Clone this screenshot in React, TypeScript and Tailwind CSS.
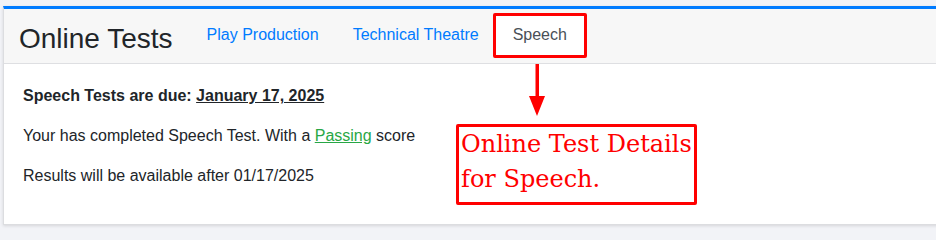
export default function App() {
  return (
    <div className="relative h-[240px] w-[936px] overflow-hidden bg-[#f2f3f7] pl-[3px] pt-[6px] font-['Liberation_Sans',Arial,sans-serif] text-[#212529]">
      <TestCard />

      {/* annotation: box around active tab */}
      <div className="absolute left-[493px] top-[13px] h-[45px] w-[94px] rounded-[2px] border-[3px] border-[#ff0000]" />

      {/* annotation: arrow */}
      <svg
        className="absolute left-[527px] top-[64px]"
        width="20"
        height="54"
        viewBox="0 0 20 54"
      >
        <rect x="8.5" y="0" width="3.5" height="34" fill="#ff0000" />
        <polygon points="2,32 18,32 10,52" fill="#ff0000" />
      </svg>

      {/* annotation: note */}
      <div className="absolute left-[456px] top-[124px] h-[81px] w-[241px] rounded-[2px] border-[3px] border-[#ff0000] pl-[2px] font-['DejaVu_Serif',serif] text-[24px] leading-[35px] text-[#ff0000]">
        Online Test Details
        <br />
        for Speech.
      </div>
    </div>
  );
}

const TestCard = () => {
  return (
    <div className="w-[960px] shrink-0 border border-t-[3px] border-[#dcdde0] border-t-[#007bff] bg-white shadow-[0_1px_3px_rgba(0,0,0,0.12)]">
      <div className="flex h-[55px] items-start border-b border-[#dedfe2] bg-[#f7f7f7] pl-[15px]">
        <h3 className="pt-[14px] text-[28px] leading-[32px] font-normal">
          Online Tests
        </h3>
        <nav className="ml-[17px] mt-[5px] flex text-[16px] leading-[24px]">
          <a className="border border-transparent px-4 py-2 text-[#007bff]">
            Play Production
          </a>
          <a className="border border-transparent px-4 py-2 text-[#007bff]">
            Technical Theatre
          </a>
          <a className="h-[44px] border border-transparent bg-white px-4 py-2 text-[#495057]">
            Speech
          </a>
        </nav>
      </div>

      <div className="px-[19px] pt-[20px] pb-[20px] text-[16px] leading-[24px]">
        <p className="mb-4 font-bold">
          Speech Tests are due: <span className="underline">January 17, 2025</span>
        </p>
        <p className="mb-4">
          Your has completed Speech Test. With a{" "}
          <span className="text-[#28a745] underline">Passing</span> score
        </p>
        <p className="mb-4">Results will be available after 01/17/2025</p>
      </div>
    </div>
  );
}
